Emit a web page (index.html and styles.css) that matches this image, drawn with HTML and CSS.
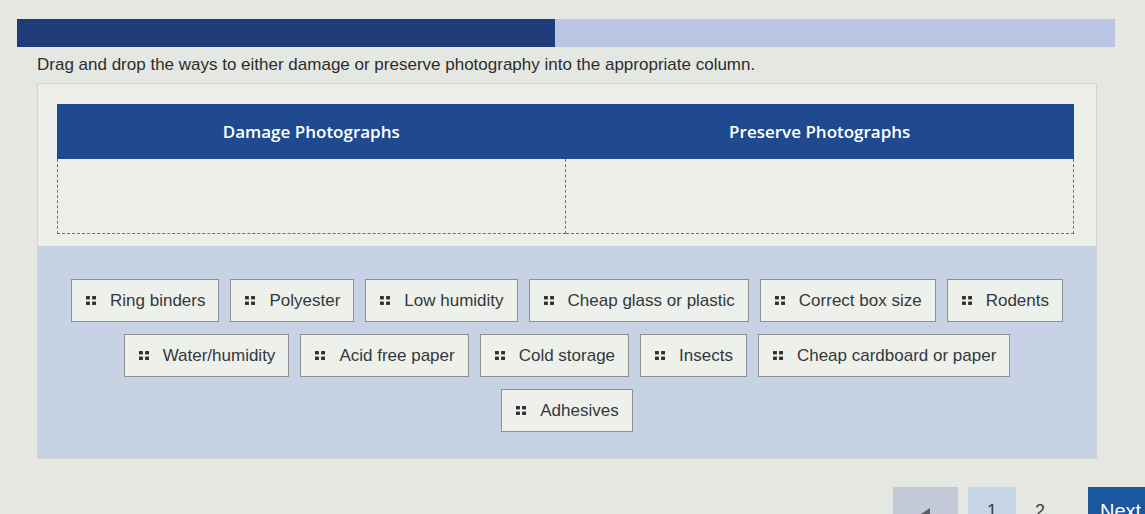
FILE: index.html
```html
<!DOCTYPE html>
<html lang="en">
<head>
    <meta charset="UTF-8">
    <meta name="viewport" content="width=device-width, initial-scale=1.0">
    <title>Photograph Care</title>
    <link rel="stylesheet" href="styles.css">
</head>
<body>
    <div class="page">
        <div class="progress">
            <div class="progress-done"></div>
            <div class="progress-rest"></div>
        </div>

        <p class="instructions">Drag and drop the ways to either damage or preserve photography into the appropriate column.</p>

        <div class="task">
            <div class="columns">
                <div class="col-heads">
                    <div class="col-head">Damage Photographs</div>
                    <div class="col-head">Preserve Photographs</div>
                </div>
                <div class="drop-zones">
                    <div class="drop-zone"></div>
                    <div class="drop-zone"></div>
                </div>
            </div>

            <div class="bank">
                <div class="bank-row">
                    <div class="chip"><svg class="grip" viewBox="0 0 9 8"><rect x="0" y="0" width="3.5" height="3"/><rect x="5.5" y="0" width="3.5" height="3"/><rect x="0" y="5" width="3.5" height="3"/><rect x="5.5" y="5" width="3.5" height="3"/></svg>Ring binders</div>
                    <div class="chip"><svg class="grip" viewBox="0 0 9 8"><rect x="0" y="0" width="3.5" height="3"/><rect x="5.5" y="0" width="3.5" height="3"/><rect x="0" y="5" width="3.5" height="3"/><rect x="5.5" y="5" width="3.5" height="3"/></svg>Polyester</div>
                    <div class="chip"><svg class="grip" viewBox="0 0 9 8"><rect x="0" y="0" width="3.5" height="3"/><rect x="5.5" y="0" width="3.5" height="3"/><rect x="0" y="5" width="3.5" height="3"/><rect x="5.5" y="5" width="3.5" height="3"/></svg>Low humidity</div>
                    <div class="chip"><svg class="grip" viewBox="0 0 9 8"><rect x="0" y="0" width="3.5" height="3"/><rect x="5.5" y="0" width="3.5" height="3"/><rect x="0" y="5" width="3.5" height="3"/><rect x="5.5" y="5" width="3.5" height="3"/></svg>Cheap glass or plastic</div>
                    <div class="chip"><svg class="grip" viewBox="0 0 9 8"><rect x="0" y="0" width="3.5" height="3"/><rect x="5.5" y="0" width="3.5" height="3"/><rect x="0" y="5" width="3.5" height="3"/><rect x="5.5" y="5" width="3.5" height="3"/></svg>Correct box size</div>
                    <div class="chip"><svg class="grip" viewBox="0 0 9 8"><rect x="0" y="0" width="3.5" height="3"/><rect x="5.5" y="0" width="3.5" height="3"/><rect x="0" y="5" width="3.5" height="3"/><rect x="5.5" y="5" width="3.5" height="3"/></svg>Rodents</div>
                </div>
                <div class="bank-row">
                    <div class="chip"><svg class="grip" viewBox="0 0 9 8"><rect x="0" y="0" width="3.5" height="3"/><rect x="5.5" y="0" width="3.5" height="3"/><rect x="0" y="5" width="3.5" height="3"/><rect x="5.5" y="5" width="3.5" height="3"/></svg>Water/humidity</div>
                    <div class="chip"><svg class="grip" viewBox="0 0 9 8"><rect x="0" y="0" width="3.5" height="3"/><rect x="5.5" y="0" width="3.5" height="3"/><rect x="0" y="5" width="3.5" height="3"/><rect x="5.5" y="5" width="3.5" height="3"/></svg>Acid free paper</div>
                    <div class="chip"><svg class="grip" viewBox="0 0 9 8"><rect x="0" y="0" width="3.5" height="3"/><rect x="5.5" y="0" width="3.5" height="3"/><rect x="0" y="5" width="3.5" height="3"/><rect x="5.5" y="5" width="3.5" height="3"/></svg>Cold storage</div>
                    <div class="chip"><svg class="grip" viewBox="0 0 9 8"><rect x="0" y="0" width="3.5" height="3"/><rect x="5.5" y="0" width="3.5" height="3"/><rect x="0" y="5" width="3.5" height="3"/><rect x="5.5" y="5" width="3.5" height="3"/></svg>Insects</div>
                    <div class="chip"><svg class="grip" viewBox="0 0 9 8"><rect x="0" y="0" width="3.5" height="3"/><rect x="5.5" y="0" width="3.5" height="3"/><rect x="0" y="5" width="3.5" height="3"/><rect x="5.5" y="5" width="3.5" height="3"/></svg>Cheap cardboard or paper</div>
                </div>
                <div class="bank-row">
                    <div class="chip"><svg class="grip" viewBox="0 0 9 8"><rect x="0" y="0" width="3.5" height="3"/><rect x="5.5" y="0" width="3.5" height="3"/><rect x="0" y="5" width="3.5" height="3"/><rect x="5.5" y="5" width="3.5" height="3"/></svg>Adhesives</div>
                </div>
            </div>
        </div>

        <div class="pager">
            <button type="button" class="page-btn prev-btn"><svg viewBox="0 0 10 12" class="prev-arrow"><path d="M9 0 L0 6 L9 12 Z"/></svg></button>
            <button type="button" class="page-btn current">1</button>
            <button type="button" class="page-btn plain">2</button>
            <button type="button" class="page-btn next-btn">Next</button>
        </div>
    </div>
</body>
</html>
```

FILE: styles.css
```css
* {
    margin: 0;
    padding: 0;
    box-sizing: border-box;
}

body {
    background-color: #e5e7e3;
    font-family: "Liberation Sans", Arial, sans-serif;
    color: #2f3133;
    overflow: hidden;
}

.page {
    padding: 19px 30px 0 17px;
}

.progress {
    display: flex;
    height: 28px;
}

.progress-done {
    width: 538px;
    background-color: #1f3c78;
}

.progress-rest {
    flex: 1;
    background-color: #b9c5e2;
}

.instructions {
    margin: 8px 0 0 20px;
    font-size: 17px;
    line-height: 19px;
    color: #2c2d2f;
}

.task {
    margin: 9px 18px 0 20px;
    border: 1px solid #d2d4d0;
    background-color: #eceeea;
}

.columns {
    padding: 20px 22px 12px 19px;
}

.col-heads {
    display: flex;
    background-color: #1f4a8f;
    height: 55px;
}

.col-head {
    flex: 1;
    display: flex;
    align-items: center;
    justify-content: center;
    color: #fff;
    font-family: "Open Sans", sans-serif;
    font-weight: 600;
    font-size: 17px;
}

.drop-zones {
    display: flex;
}

.drop-zone {
    flex: 1;
    height: 75px;
    border: 1px dashed #6f7270;
    border-top: none;
}

.drop-zone + .drop-zone {
    border-left: none;
}

.bank {
    background-color: #c8d2e5;
    padding: 33px 20px 26px;
    display: flex;
    flex-direction: column;
    gap: 12px;
}

.bank-row {
    display: flex;
    justify-content: center;
    gap: 11px;
}

.chip {
    display: flex;
    align-items: center;
    gap: 14px;
    height: 43px;
    padding: 0 13px 0 14px;
    background-color: #eef0ec;
    border: 1px solid #8e918f;
    font-size: 17px;
    color: #33383c;
    cursor: move;
}

.grip {
    width: 10px;
    height: 9px;
    fill: #2c2f31;
}

.pager {
    display: flex;
    align-items: flex-start;
    gap: 10px;
    margin-top: 28px;
    padding-left: 876px;
}

.page-btn {
    flex-shrink: 0;
    height: 42px;
    width: 48px;
    border: none;
    background: transparent;
    font-family: "Liberation Sans", Arial, sans-serif;
    font-size: 18px;
    color: #3a3f44;
    padding-top: 6px;
}

.prev-btn {
    width: 65px;
    background-color: #c3c9d6;
}

.prev-arrow {
    width: 10px;
    height: 12px;
    fill: #5a5f66;
    margin-top: 10px;
}

.current {
    background-color: #c6d6e5;
}

.plain {
    width: 28px;
}

.next-btn {
    width: 90px;
    margin-left: 24px;
    background-color: #1a579e;
    color: #fff;
    font-size: 20px;
    text-align: left;
    padding-left: 12px;
}
```
